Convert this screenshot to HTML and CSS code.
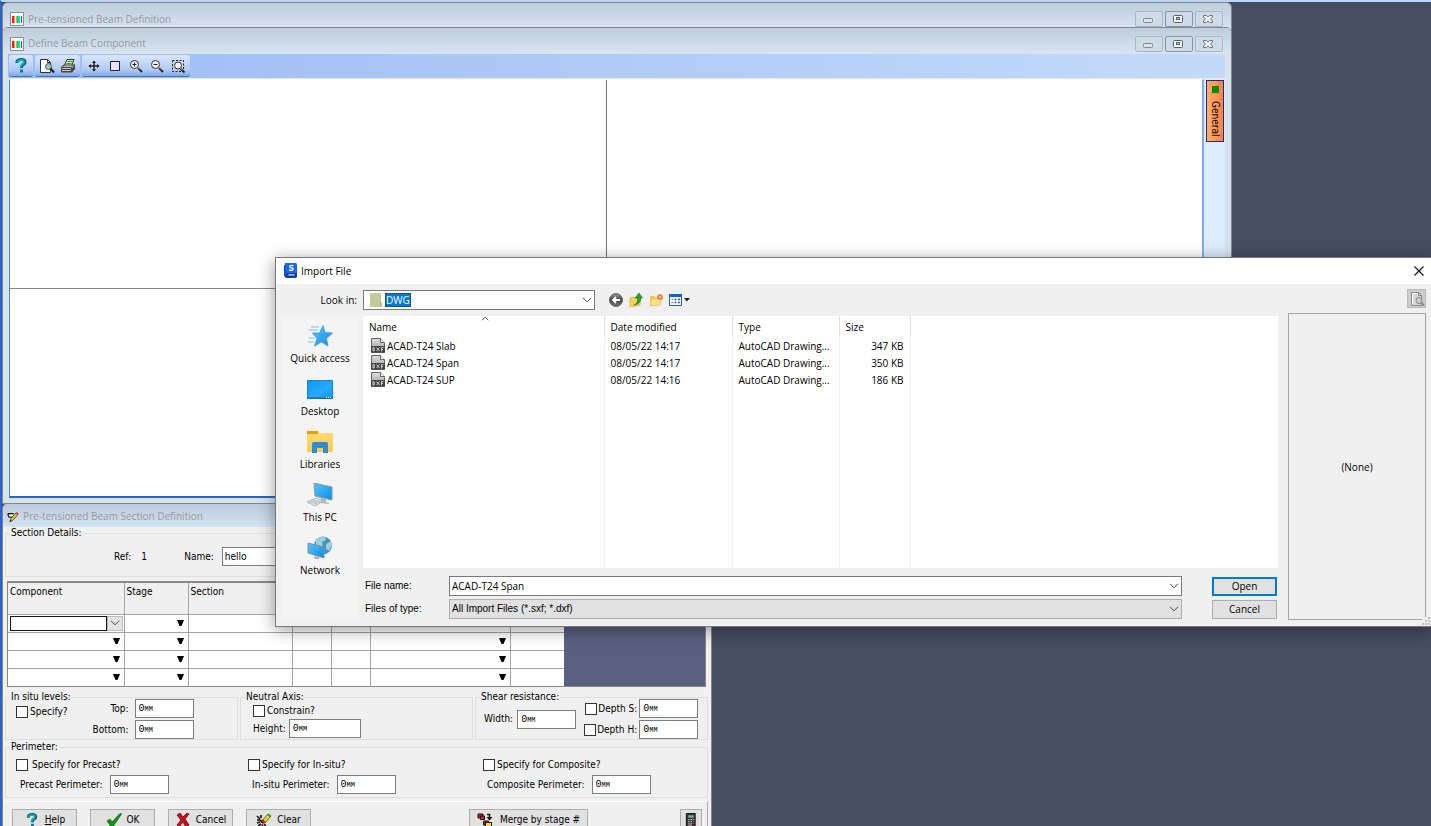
FILE: index.html
```html
<!DOCTYPE html>
<html lang="en">
<head>
<meta charset="utf-8">
<title>Pre-tensioned Beam Definition</title>
<link rel="stylesheet" href="styles.css">
</head>
<body>
<svg class="defs" aria-hidden="true">
  <defs>
    <linearGradient id="blue" x1="0" y1="0" x2="1" y2="1"><stop offset="0" stop-color="#5cc4fb"/><stop offset="1" stop-color="#0b8be6"/></linearGradient>
    <linearGradient id="screen" x1="0" y1="0" x2="1" y2="1"><stop offset="0" stop-color="#0a9bf5"/><stop offset=".6" stop-color="#2aa9ff"/><stop offset="1" stop-color="#0a93f0"/></linearGradient>
    <linearGradient id="folder" x1="0" y1="0" x2="0" y2="1"><stop offset="0" stop-color="#ffdc77"/><stop offset="1" stop-color="#fbcb50"/></linearGradient>
    <linearGradient id="ball" x1="0" y1="0" x2="0" y2="1"><stop offset="0" stop-color="#999"/><stop offset=".5" stop-color="#444"/><stop offset="1" stop-color="#777"/></linearGradient>
    <linearGradient id="page" x1="0" y1="0" x2="0" y2="1"><stop offset="0" stop-color="#ddd"/><stop offset="1" stop-color="#999"/></linearGradient>
    <symbol id="i-app" viewBox="0 0 14 14"><path fill="#fff" stroke="#8d8d95" d="M.5.5h13v13H.5z"/><path fill="#e22" d="M2 4h2v7H2z"/><path fill="#f90" d="M4 4h1v7H4z"/><path fill="#a9c52a" d="M6 4h1v7H6z"/><path fill="#20b98a" d="M7 4h1v7H7z"/><path fill="#0dd" d="M8 4h2v7H8z"/><path fill="#25d" d="M11 4h1v7h-1z"/></symbol>
    <symbol id="i-min" viewBox="0 0 28 16"><rect x="8.500" y="7.500" width="9" height="4" rx="1" fill="#e4e4e4" stroke="#7f8790"/></symbol>
    <symbol id="i-max" viewBox="0 0 28 16"><rect x="8.500" y="4.500" width="9" height="7" rx="1" fill="#f4f4f4" stroke="#596270"/><rect x="11.500" y="6.500" width="3" height="2" fill="#ccc" stroke="#596270"/></symbol>
    <symbol id="i-x" viewBox="0 0 28 16"><path d="M8.500 4.500h3l1.500 1.500 1.500-1.500h3v1.500L15.500 8l2 2v1.500h-3L13 10l-1.500 1.500h-3V10l2-2-2-2z" fill="#eee" stroke="#6c7480"/></symbol>
    <symbol id="i-help" viewBox="0 0 12 15"><path d="M2 5V3.500Q3 1.500 6 1.500q4 0 4 2.500 0 2-2.500 3Q6.500 8 6.500 10" fill="none" stroke="#075a75" stroke-width="3"/><path d="M2 4.500Q3 2 6 2q3 0 3 2 0 1.500-2 2.500-1.500 1-1.500 3" fill="none" stroke="#12abb5" stroke-width="2"/><path d="M5 11.500h3v3H5z" fill="#087a91"/></symbol>
    <symbol id="i-preview" viewBox="0 0 16 16"><path d="M1.500 1.500h7l3 3v10h-10z" fill="#fff" stroke="#333"/><path d="M8.500 1.500v3h3" fill="none" stroke="#333"/><circle cx="9.500" cy="8.500" r="3" fill="#9dc5c8" stroke="#555"/><path d="m11.500 10.500 3.500 4" stroke="#222" stroke-width="2"/></symbol>
    <symbol id="i-print" viewBox="0 0 16 16"><path d="m4.500 7 2.500-5.500h7L12 7" fill="#c9ecb8" stroke="#333"/><path d="M7.500 3.500h5M6.500 5.500h5" stroke="#2b9a35"/><path d="m1 9 3-2.500h11V11l-3 3.500H1z" fill="#444"/><path d="m2.500 9 2-1.500h9L12 9z" fill="#bbb"/><path d="M2 10.500h9M2 12.500h9" stroke="#c8c8c8"/><path d="m12 10 2-2" stroke="#999"/></symbol>
    <symbol id="i-move" viewBox="0 0 14 14"><path d="M7 2v10M2 7h10" stroke="#222" stroke-width="1.400"/><path d="m7 1.500 2 2.500H5zM7 12.500 9 10H5zM1.500 7 4 5v4zM12.500 7 10 5v4z" fill="#222"/></symbol>
    <symbol id="i-rect" viewBox="0 0 14 14"><path d="M2.500 2.500h9v9h-9z" fill="#e8e4fb" stroke="#222"/></symbol>
    <symbol id="i-zin" viewBox="0 0 14 14"><circle cx="5.500" cy="5.500" r="4" fill="#f4f1fb" stroke="#333"/><path d="M3.500 5.500h4M5.500 3.500v4" stroke="#222"/><path d="m9 9 4 4" stroke="#222" stroke-width="2"/><path d="m9 8.500 2 2" stroke="#d7c23a"/></symbol>
    <symbol id="i-zout" viewBox="0 0 14 14"><circle cx="5.500" cy="5.500" r="4" fill="#f4f1fb" stroke="#333"/><path d="M3.500 5.500h4" stroke="#222"/><path d="m9 9 4 4" stroke="#222" stroke-width="2"/><path d="m9 8.500 2 2" stroke="#d7c23a"/></symbol>
    <symbol id="i-zwin" viewBox="0 0 14 14"><path d="M1.500 1.500h11v11h-11z" fill="none" stroke="#222" stroke-dasharray="2 1.500"/><circle cx="7" cy="6.500" r="3.500" fill="#f4f1fb" stroke="#333"/><path d="m9.500 9.500 4 4" stroke="#222" stroke-width="2"/><path d="m9.500 9 2 2" stroke="#d7c23a"/></symbol>
    <symbol id="i-pen" viewBox="0 0 12 12"><path d="M.8 2.800h6M.8 3l1.500 3h3" fill="none" stroke="#111" stroke-width="1.600"/><path d="M1.500 3.500h5L5 5.500H2.500z" fill="#fff"/><path d="m3 10.500 1-3L9 2l2 1.500-5.500 6z" fill="#f0cf19" stroke="#333" stroke-width=".8"/><path d="m8.500 2.500 1.500-1.500 1.500 1.500L10.500 4z" fill="#c33"/><path d="m2.500 11 .8-2 1.400 1z" fill="#111"/></symbol>
    <symbol id="i-dxf" viewBox="0 0 14 15"><path d="M.5.500h9l4 4v10H.5z" fill="url(#page)" stroke="#666"/><path d="M9.500.5v4h4" fill="#fff" stroke="#666"/><path d="M0 8h14v6.500H0z" fill="#444"/><path d="M2 9.500v3.500h1q1-1.700 0-3.500zM5.500 9.500l3 3.500M8.500 9.500l-3 3.500M10.500 13.500v-4h2M10.500 11.500H12" stroke="#eee" fill="none" stroke-width=".8"/></symbol>
    <symbol id="i-chev" viewBox="0 0 10 6"><path d="m1 .8 4 4 4-4" fill="none" stroke="#444"/></symbol>
    <symbol id="i-tri" viewBox="0 0 7 6"><path d="M0 0h7L4.500 6h-2z" fill="#000"/></symbol>
  </defs>
</svg>

<main class="desktop">
  <section class="window definition">
    <header class="titlebar">
      <svg class="app-icon"><use href="#i-app"/></svg><h1>Pre-tensioned Beam Definition</h1>
      <div class="controls"><button aria-label="Minimise"><svg><use href="#i-min"/></svg></button><button class="max" aria-label="Maximise"><svg><use href="#i-max"/></svg></button><button aria-label="Close"><svg><use href="#i-x"/></svg></button></div>
    </header>
  </section>

  <section class="window component">
    <header class="titlebar">
      <svg class="app-icon"><use href="#i-app"/></svg><h2>Define Beam Component</h2>
      <div class="controls"><button aria-label="Minimise"><svg><use href="#i-min"/></svg></button><button class="max" aria-label="Maximise"><svg><use href="#i-max"/></svg></button><button aria-label="Close"><svg><use href="#i-x"/></svg></button></div>
    </header>
    <div class="component-body">
      <nav class="toolbar">
        <div class="tools"><button aria-label="Help"><svg class="help-icon"><use href="#i-help"/></svg></button></div>
        <div class="tools"><button aria-label="Print preview"><svg><use href="#i-preview"/></svg></button><button aria-label="Print"><svg><use href="#i-print"/></svg></button></div>
        <div class="tools"><button aria-label="Pan"><svg class="small"><use href="#i-move"/></svg></button><button aria-label="Zoom extents"><svg class="small"><use href="#i-rect"/></svg></button><button aria-label="Zoom in"><svg class="small"><use href="#i-zin"/></svg></button><button aria-label="Zoom out"><svg class="small"><use href="#i-zout"/></svg></button><button aria-label="Zoom window"><svg class="small"><use href="#i-zwin"/></svg></button></div>
      </nav>
      <div class="workspace">
        <div class="canvas"></div>
        <aside class="side"><button class="tab"><span class="dot"></span><span class="tab-text">General</span></button></aside>
      </div>
    </div>
  </section>

  <section class="window section-win">
    <header class="titlebar"><svg class="pen"><use href="#i-pen"/></svg><h2>Pre-tensioned Beam Section Definition</h2></header>
    <form class="section-body">
      <fieldset class="details">
        <legend>Section Details:</legend>
        <div class="details-row"><span>Ref:</span><span class="ref">1</span><label for="name">Name:</label><input id="name" type="text" value="hello"></div>
      </fieldset>

      <div class="table-box">
        <table class="components">
          <colgroup><col class="c1"><col class="c2"><col class="c3"><col class="c4"><col class="c4"><col class="c5"><col class="c6"></colgroup>
          <thead><tr><th>Component</th><th>Stage</th><th>Section</th><th></th><th></th><th></th><th></th></tr></thead>
          <tbody>
            <tr><td class="edit"><div class="combo"><input type="text" aria-label="Component"><button type="button" aria-label="Choose component"><svg><use href="#i-chev"/></svg></button></div></td><td><svg class="tri"><use href="#i-tri"/></svg></td><td></td><td></td><td></td><td><svg class="tri"><use href="#i-tri"/></svg></td><td></td></tr>
            <tr><td><svg class="tri"><use href="#i-tri"/></svg></td><td><svg class="tri"><use href="#i-tri"/></svg></td><td></td><td></td><td></td><td><svg class="tri"><use href="#i-tri"/></svg></td><td></td></tr>
            <tr><td><svg class="tri"><use href="#i-tri"/></svg></td><td><svg class="tri"><use href="#i-tri"/></svg></td><td></td><td></td><td></td><td><svg class="tri"><use href="#i-tri"/></svg></td><td></td></tr>
            <tr><td><svg class="tri"><use href="#i-tri"/></svg></td><td><svg class="tri"><use href="#i-tri"/></svg></td><td></td><td></td><td></td><td><svg class="tri"><use href="#i-tri"/></svg></td><td></td></tr>
          </tbody>
        </table>
      </div>

      <div class="groups">
        <fieldset>
          <legend>In situ levels:</legend>
          <div class="levels">
            <label class="check"><input type="checkbox">Specify?</label>
            <div class="pairs"><label for="top">Top:</label><input class="unit" id="top" type="text" value="0mm"><label for="bottom">Bottom:</label><input class="unit" id="bottom" type="text" value="0mm"></div>
          </div>
        </fieldset>
        <fieldset>
          <legend>Neutral Axis:</legend>
          <div class="axis">
            <label class="check"><input type="checkbox">Constrain?</label>
            <div class="field"><label for="height">Height:</label><input class="unit wide" id="height" type="text" value="0mm"></div>
          </div>
        </fieldset>
        <fieldset>
          <legend>Shear resistance:</legend>
          <div class="shear">
            <div class="field"><label for="width">Width:</label><input class="unit" id="width" type="text" value="0mm"></div>
            <div class="pairs"><label class="check"><input type="checkbox">Depth S:</label><input class="unit" type="text" value="0mm" aria-label="Depth S"><label class="check"><input type="checkbox">Depth H:</label><input class="unit" type="text" value="0mm" aria-label="Depth H"></div>
          </div>
        </fieldset>
      </div>

      <fieldset class="perimeter">
        <legend>Perimeter:</legend>
        <div class="perimeter-grid">
          <div><label class="check precast"><input type="checkbox">Specify for Precast?</label><div class="field"><label for="pp">Precast Perimeter:</label><input class="unit" id="pp" type="text" value="0mm"></div></div>
          <div><label class="check"><input type="checkbox">Specify for In-situ?</label><div class="field"><label for="ip">In-situ Perimeter:</label><input class="unit" id="ip" type="text" value="0mm"></div></div>
          <div><label class="check"><input type="checkbox">Specify for Composite?</label><div class="field"><label for="cp">Composite Perimeter:</label><input class="unit" id="cp" type="text" value="0mm"></div></div>
        </div>
      </fieldset>

      <footer class="actions">
        <button type="button"><svg class="help-icon"><use href="#i-help"/></svg><span><u>H</u>elp</span></button>
        <button type="button"><svg viewBox="0 0 16 14"><path d="m1 8 3-2 2 3 8-8.500 1.500.5-8.500 12.500H5z" fill="#0a9a12" stroke="#066b0b" stroke-width=".8"/></svg>OK</button>
        <button type="button"><svg viewBox="0 0 14 14"><path d="m1 2 3-2 3 4 4-4 2 1-4 5 4 6-3 2-3-5-4 5-2-2 4-5z" fill="#c41420" stroke="#700" stroke-width=".8"/></svg>Cancel</button>
        <button type="button"><svg viewBox="0 0 16 14"><path d="m6 8 6-7 3 2-6 7z" fill="#f4dc24" stroke="#333" stroke-width=".8"/><path d="m11 2 1.500-1.500 3 2L14 4.500z" fill="#3a3"/><path d="m4 9 2.500-3L9.500 8.500 7.500 11z" fill="#d22"/><path d="m1 3 3 3M1 7h3M5 2v3M1 10l3-1M2 13l3-2M7 13.500l-1-2M10 13l-2-2M4 7l3 3" stroke="#111" stroke-width="1.600"/></svg>Clear</button>
        <button type="button" class="merge"><svg viewBox="0 0 16 14"><path d="M1 1h5v4H1z" fill="#d22" stroke="#111"/><path d="M3.500 3h4v3.500h-4z" fill="#d22" stroke="#111"/><path d="M10 1.500h2.500v4" fill="none" stroke="#111" stroke-width="1.500"/><path d="M9.500 4h6l-3 3.500z" fill="#111"/><path d="M6.500 8h5v4h-5z" fill="#d22" stroke="#111"/><path d="M8.500 9.500h6v4h-6z" fill="#fd2" stroke="#111"/></svg>Merge by stage #</button>
        <button type="button" class="calc" aria-label="Calculator"><svg viewBox="0 0 12 15"><path d="M1 .5h9.500v14H1z" fill="#333" stroke="#111"/><path d="M3 2.500h6v2.500H3z" fill="#7ab5ad"/><path d="M3 7h1.500M5.500 7H7M8 7h1.500M3 9h1.500M5.500 9H7M3 11h1.500M5.500 11H7M3 13h4" stroke="#ddd"/><path d="M8 9h1.500M8 11h1.500" stroke="#e44"/></svg></button>
      </footer>
    </form>
  </section>

  <section class="dialog" role="dialog" aria-label="Import File">
    <header class="dialog-title">
      <svg viewBox="0 0 14 15"><path d="M1 0h11l1 1v12l-1 1H1z" fill="#1768ee"/><path d="M1 1 0 3v10l2 2h10l1-1H2z" fill="#0c48b9"/><path d="M2 10h11v4H2z" fill="#123f9d"/><path d="M4.500 11.800h6" stroke="#b5cdf8" stroke-width="1.500"/><path d="M9.500 3Q8 2 6.500 2.600q-1.500 1.200 0 2l2 .4q1.500 1-.2 2.200-1.800.5-3.300-.4" fill="none" stroke="#fff" stroke-width="1.300"/></svg>
      <h2>Import File</h2>
      <button aria-label="Close"><svg viewBox="0 0 10 10"><path d="m.5.5 9 9M9.500.5l-9 9" stroke="#111" stroke-width="1.100"/></svg></button>
    </header>
    <form class="dialog-body">
      <div class="browser">
        <div class="look-row">
          <label for="look">Look in:</label>
          <div class="look-combo" id="look" tabindex="0" role="combobox" aria-expanded="false" aria-controls="files"><svg class="folder" viewBox="0 0 12 14"><path d="M0 0h11v9l1 1v4H0z" fill="#b9c28c"/><path d="M0 0h10v14H0z" fill="#c3cb98"/></svg><span>DWG</span><svg class="chev"><use href="#i-chev"/></svg></div>
          <div class="nav-icons">
            <button type="button" aria-label="Back"><svg viewBox="0 0 14 14"><circle cx="7" cy="7" r="6.500" fill="url(#ball)" stroke="#666"/><path d="M11 7H4M7 4 4 7l3 3" fill="none" stroke="#fff" stroke-width="1.800"/></svg></button>
            <button type="button" aria-label="Up one level"><svg viewBox="0 0 14 14"><path d="m1 5 4-1 1 1 6-1-1 8-10 2z" fill="#f6d35b" stroke="#d7a92e" stroke-width=".7"/><path d="M5 12q4-1 3.500-7H6l4-5 3.500 5h-2Q12 11 5 12z" fill="#25a32c" stroke="#12761b" stroke-width=".6"/></svg></button>
            <button type="button" aria-label="New folder"><svg viewBox="0 0 14 14"><path d="M1 3h4l1 1h5v8l-10 1z" fill="#f2c950"/><path d="m1 13 2-7 10-1-2 7z" fill="#ffe28a" stroke="#e3b647" stroke-width=".6"/><circle cx="11" cy="4" r="2.700" fill="#f0642d"/><path d="M11 2.500v3M9.500 4h3" stroke="#ffd9b0"/></svg></button>
            <button type="button" class="views" aria-label="Views"><svg viewBox="0 0 21 14"><path d="M.5 1.500h12v11H.5z" fill="#fff" stroke="#1762b8"/><path d="M0 1h13v3H0z" fill="#1762c8"/><path d="M2.500 6.500h2M2.500 9.500h2" stroke="#6aa" stroke-width="1.500"/><path d="M5.500 6.500h2M9 9.500h2" stroke="#26b" stroke-width="1.500"/><path d="M9 6.500h2M5.500 9.500h2" stroke="#744" stroke-width="1.500"/><path d="M15 5h6l-3 3.500z" fill="#222"/></svg></button>
          </div>
        </div>
        <nav class="places">
          <button type="button"><svg viewBox="0 0 28 24"><path d="M5 3h8M3 6h9M3 14h6M2 18h6" stroke="#7cc0ea"/><path d="m17 1.500 2 7 7.500.5-6 5.500 1.500 7.500-6.500-4-7 4 2.500-7.500L6.500 9h7z" fill="url(#blue)" stroke="#3999d5" stroke-width=".8"/></svg>Quick access</button>
          <button type="button"><svg viewBox="0 0 28 24"><path d="M1.500 3.500h25v18h-25z" fill="url(#screen)" stroke="#1684cf"/><path d="M1 21h26" stroke="#0b5d9b"/><path d="M20 20.500h6" stroke="#fff" stroke-dasharray="1 1"/></svg>Desktop</button>
          <button type="button"><svg viewBox="0 0 28 24"><path d="M1 1h11l1.500 2H27v19H1z" fill="url(#folder)"/><path d="M1 1h11v3H1z" fill="#e2a00c"/><path d="M6 23v-9q0-2 2-2h12q2 0 2 2v9h-5v-5h-6v5z" fill="#338bd2"/></svg>Libraries</button>
          <button type="button"><svg viewBox="0 0 28 24"><path d="m8 0 18 4v13L9 13z" fill="url(#blue)" stroke="#8998a4"/><path d="m15 15 5 1v3l3 1v1l-8-1z" fill="#adb7bd"/><path d="m1 19 9-4 8 3-9 5z" fill="#e2e6e8" stroke="#9ea8ad" stroke-width=".8"/><path d="m3 19 9 2M5 18l9 2M7 17l9 2" stroke="#a9b1b5" stroke-width=".7"/></svg>This PC</button>
          <button type="button"><svg viewBox="0 0 28 24"><circle cx="17" cy="9.500" r="9" fill="#4593bb"/><path d="M10 4q4-4 9-3l1 3-4 2 1 4-4 2-3-3zM20 8l5-3 1 4-3 6-3-2z" fill="#9bd0de"/><path d="m2 7 16 4v11L2 17z" fill="url(#blue)" stroke="#7d929f"/><path d="m9 20 4 1v2H8z" fill="#aab4b9"/></svg>Network</button>
        </nav>
        <div class="files" id="files">
          <table>
            <colgroup><col class="f-name"><col class="f-date"><col class="f-type"><col class="f-size"><col></colgroup>
            <thead><tr><th class="sorted">Name<svg class="sort"><use href="#i-chev"/></svg></th><th>Date modified</th><th>Type</th><th>Size</th><th></th></tr></thead>
            <tbody>
              <tr><td><span class="file"><svg><use href="#i-dxf"/></svg>ACAD-T24 Slab</span></td><td>08/05/22 14:17</td><td>AutoCAD Drawing...</td><td class="num">347 KB</td><td></td></tr>
              <tr><td><span class="file"><svg><use href="#i-dxf"/></svg>ACAD-T24 Span</span></td><td>08/05/22 14:17</td><td>AutoCAD Drawing...</td><td class="num">350 KB</td><td></td></tr>
              <tr><td><span class="file"><svg><use href="#i-dxf"/></svg>ACAD-T24 SUP</span></td><td>08/05/22 14:16</td><td>AutoCAD Drawing...</td><td class="num">186 KB</td><td></td></tr>
              <tr class="rest"><td></td><td></td><td></td><td></td><td></td></tr>
            </tbody>
          </table>
        </div>
        <div class="choose">
          <label for="fname">File name:</label>
          <div class="file-combo"><input id="fname" type="text" value="ACAD-T24 Span"><svg><use href="#i-chev"/></svg></div>
          <button type="button" class="push primary">Open</button>
          <label for="ftype">Files of type:</label>
          <div class="file-combo grey"><select id="ftype"><option>All Import Files (*.sxf; *.dxf)</option></select><svg><use href="#i-chev"/></svg></div>
          <button type="button" class="push">Cancel</button>
        </div>
      </div>
      <div class="preview-col">
        <button type="button" class="preview-btn" aria-label="Preview"><svg viewBox="0 0 16 16"><path d="M2.500 1.500h7l3 3v10h-10z" fill="#d8d8d8" stroke="#888"/><path d="M3.500 13V2.500H9" fill="none" stroke="#fff"/><path d="M9.500 1.500v3h3" fill="none" stroke="#888"/><circle cx="10" cy="9.500" r="3" fill="#ccc" stroke="#888"/><path d="m12 11.500 3 3" stroke="#888" stroke-width="2"/></svg></button>
        <div class="preview">(None)</div>
        <svg class="grip" viewBox="0 0 8 8"><path d="M6 0h2v2H6zM3 3h2v2H3zM6 3h2v2H6zM0 6h2v2H0zM3 6h2v2H3zM6 6h2v2H6z" fill="#bfbfbf"/></svg>
      </div>
    </form>
  </section>
</main>
</body>
</html>
```
FILE: styles.css
```css
* { box-sizing: border-box; }
body { margin: 0; font: 10px/14px "DejaVu Sans Condensed", "DejaVu Sans", sans-serif; color: #000; }
button, input, select { font: inherit; color: inherit; margin: 0; padding: 0; border-radius: 0; }
button { display: flex; align-items: center; justify-content: center; border: 0; background: none; }
h1, h2 { margin: 0; font: inherit; }
svg { display: block; flex: none; }
.defs { position: absolute; width: 0; height: 0; }

.desktop { position: relative; height: 100vh; overflow: hidden; background: #464d60; border-top: 2px solid #b9d5f5; border-left: 2px solid #2b62c4; }

/* MDI windows */
.window { position: absolute; display: flex; flex-direction: column; border: 1px solid #858585; border-radius: 6px 6px 0 0; background: #d6e3ef; overflow: hidden; }
.definition { top: 0; left: 0; right: 199px; height: 60px; }
.component { top: 25px; left: 0; right: 199px; height: 477px; }
.section-win { top: 501px; left: 0; width: 710px; background: #f0f0f0; }
.titlebar { display: flex; align-items: center; gap: 4px; height: 27px; padding: 5px 8px 0 7px; flex: none; background: linear-gradient(#becddb, #d8e4f0); color: #9499a0; font: 10px/15px "Open Sans", sans-serif; }
.component .titlebar { height: 26px; }
.app-icon { width: 14px; height: 14px; }
.controls { display: flex; gap: 2px; margin-left: auto; }
.controls button { width: 28px; height: 16px; border: 1px solid #a9b8c8; border-radius: 2px; background: #cedbe7; }
.controls .max { border-color: #8595ad; }
.controls svg { width: 28px; height: 16px; }

.component-body { flex: 1; display: flex; flex-direction: column; margin: 0 6px 5px 5px; background: #deeafe; min-height: 0; }
.toolbar { display: flex; gap: 2px; height: 24px; flex: none; padding: 1px; background: linear-gradient(90deg, #9ebcf5, #c3daf9); }
.tools { display: flex; align-items: center; gap: 5px; height: 22px; padding: 0 4px; border-radius: 3px; border-bottom: 1px solid #4470ae; background: linear-gradient(#dbe8fc, #b0caf5 70%, #83a9e5); }
.tools svg { width: 16px; height: 16px; }
.tools .small { width: 16px; height: 14px; }
.tools .help-icon { height: 15px; }
.workspace { flex: 1; display: flex; min-height: 0; }
.canvas { flex: 1; margin: 1px 0 0 1px; border: 1px solid #4681cd; border-bottom: 2px solid #2867bd; border-right: 2px solid #83aae6; border-top-color: #fff; background: linear-gradient(#777, #777) 50% 0 / 1px 100% no-repeat, linear-gradient(#888, #888) 0 50% / 100% 1px no-repeat, #fff; }
.side { width: 21px; padding-top: 2px; }
.tab { flex-direction: column; gap: 8px; width: 18px; height: 62px; margin-left: 2px; border: 1px solid #24248a; background: linear-gradient(90deg, #ffb068, #fb8247); }
.dot { width: 7px; height: 7px; background: #0a8500; }
.tab-text { writing-mode: vertical-rl; line-height: 12px; }

/* Section definition */
.section-win .titlebar { height: 23px; padding: 2px 4px 0; background: linear-gradient(#bccbd9, #d3e3f3); }
.pen { width: 12px; height: 12px; }
.section-body { padding: 0 3px 0 2px; }
fieldset { min-width: 0; margin: 0; padding: 0; border: 1px solid #dedede; }
legend { margin-left: 4px; padding: 0 1px; line-height: 12px; }
input[type="text"] { height: 19px; padding: 0 2px; border: 1px solid #7d7d7d; background: #fff; outline: 0; }
.section-body .unit { width: 59px; padding: 0 3px; font: 10px "Liberation Mono", monospace; font-variant: small-caps; }
.section-body .wide { width: 72px; }
.check { display: flex; align-items: center; gap: 2px; white-space: nowrap; }
.check input { appearance: none; width: 12px; height: 12px; border: 1px solid #333; background: #fff; }
.details { height: 50px; }
.details-row { display: flex; align-items: center; margin: 8px 0 0 108px; }
.ref { width: 43px; margin-left: 10px; }
.details-row input { margin-left: 8px; width: 120px; }

.table-box { margin: 4px 2px 0; border: 1px solid #888; border-top-width: 2px; background: #596080; }
.components { border-collapse: collapse; table-layout: fixed; width: 556px; background: #fff; }
.components th, .components td { padding: 0; border-right: 1px solid #a5a5a5; border-bottom: 1px solid #a5a5a5; }
.components tr > :last-child { border-right: 0; }
.components tr:last-child td { border-bottom: 0; }
.components th { height: 31px; padding: 2px 2px 0; background: #f0f0f0; text-align: left; vertical-align: top; font-weight: 400; }
.components td { height: 18px; }
.c1 { width: 116px; } .c2 { width: 64px; } .c3 { width: 104px; } .c4 { width: 39px; } .c5 { width: 140px; } .c6 { width: 54px; }
.tri { width: 7px; height: 6px; margin: 0 4px 0 auto; }
.combo { display: flex; height: 15px; margin: 0 1px 0 2px; }
.combo input[type="text"] { flex: 1; min-width: 0; height: 15px; border-color: #111; }
.combo button { width: 16px; background: #e3e3e3; border: 1px solid #bbb; }
.combo svg { width: 10px; height: 6px; }

.groups { display: grid; grid-template-columns: 1fr 1fr 1fr; gap: 2px; margin-top: 4px; }
.groups fieldset { height: 49px; }
.levels, .shear { display: flex; }
.levels { padding-left: 10px; margin-top: -4px; }
.levels .check, .axis .check { height: 16px; }
.levels > .check { margin-top: 5px; }
.pairs { display: grid; grid-template-columns: auto auto; column-gap: 6px; row-gap: 2px; align-items: center; justify-items: end; margin-left: 25px; }
.field { display: flex; align-items: center; gap: 4px; }
.axis { padding-left: 12px; }
.axis .field { gap: 3px; }
.shear { align-items: center; margin-top: -4px; padding-left: 8px; }
.shear .pairs { margin-left: 8px; column-gap: 2px; }
.shear .check { gap: 1px; }
.perimeter { margin-top: 1px; height: 57px; }
.perimeter-grid { display: grid; grid-template-columns: 230px 233px 1fr; gap: 2px; padding-left: 10px; }
.perimeter .check { margin-top: 5px; }
.perimeter .precast { gap: 4px; }
.perimeter .field { margin: 3px 0 0 4px; gap: 7px; }
.actions { display: flex; gap: 13px; margin-top: 3px; padding: 7px 5px 0 7px; border-top: 1px solid #fff; border-right: 1px solid #aaa; }
.actions button { gap: 5px; width: 65px; height: 21px; border: 1px solid #adadad; background: #e1e1e1; white-space: nowrap; }
.actions svg { width: 16px; height: 14px; }
.actions .merge { width: 119px; margin-left: 145px; gap: 7px; }
.actions .calc { width: 22px; margin-left: auto; }

/* File dialog */
.dialog { position: absolute; top: 255px; left: 273px; right: 0; border: 1px solid #777; border-right: 0; background: #f0f0f0; box-shadow: 0 3px 16px rgba(0, 0, 0, .4); font: 10px/14px "Open Sans", sans-serif; }
.dialog-title { display: flex; align-items: center; gap: 3px; height: 26px; padding: 0 7px 1px 8px; background: #fff; }
.dialog-title svg { width: 14px; height: 15px; }
.dialog-title button { margin-left: auto; }
.dialog-title button svg { width: 10px; height: 10px; }
.dialog-body { display: flex; gap: 10px; padding: 5px 5px 6px; }
.browser { flex: 1; min-width: 0; display: grid; grid-template-columns: 78px 1fr; column-gap: 4px; grid-template-rows: 20px auto auto; padding-top: 1px; }
.look-row { grid-column: 1 / 3; display: flex; align-items: center; }
.look-row label { width: 76px; text-align: right; }
.look-combo { display: flex; align-items: center; width: 232px; height: 20px; margin-left: 6px; padding: 0 2px 0 6px; border: 1px solid #7a7a7a; background: #fff; }
.look-combo span { margin-left: 3px; padding: 0 1px; background: #0078d7; color: #fff; outline: 1px dotted #333; outline-offset: -1px; }
.folder { width: 12px; height: 14px; }
.chev { width: 10px; height: 6px; margin-left: auto; }
.nav-icons { display: flex; gap: 6px; margin-left: 14px; }
.nav-icons svg { width: 14px; height: 14px; }
.nav-icons .views svg { width: 21px; }
.places { grid-row: 2 / 4; display: flex; flex-direction: column; gap: 13px; margin-top: 6px; padding-top: 8px; background: #f4f4f4; }
.places button { flex-direction: column; gap: 3px; height: 40px; white-space: nowrap; }
.places svg { width: 28px; height: 24px; }
.files { height: 252px; margin-top: 6px; background: #fff; }
.files table { width: 100%; height: 100%; table-layout: fixed; border-collapse: collapse; }
.files th, .files td { height: 17px; padding: 0 6px; border-right: 1px solid #edf4fb; text-align: left; font-weight: 400; white-space: nowrap; }
.files th { height: 21px; border-right-color: #e0e0e0; }
.files tr > :last-child { border-right: 0; }
.files .num { text-align: right; }
.f-name { width: 241px; } .f-date { width: 128px; } .f-type { width: 107px; } .f-size { width: 71px; }
.sorted { position: relative; }
.sort { position: absolute; top: 0; left: 118px; width: 8px; height: 5px; transform: rotate(180deg); }
.file { display: flex; align-items: center; gap: 2px; padding-left: 2px; }
.file svg { width: 14px; height: 15px; }
.files .rest td { height: auto; }
.choose { display: grid; grid-template-columns: 78px 1fr 65px; column-gap: 0; row-gap: 3px; align-items: center; margin-top: 8px; padding: 0 1px 1px 2px; }
.choose label, .choose select { font-family: "Liberation Sans", sans-serif; }
.choose label { width: 84px; }
.file-combo { position: relative; margin: 0 30px 0 6px; }
.file-combo input[type="text"], .file-combo select { display: block; width: 100%; height: 20px; padding: 0 2px; border: 1px solid #7a7a7a; appearance: none; background: #fff; }
.file-combo.grey select { border-color: #adadad; background: #e1e1e1; }
.file-combo svg { position: absolute; right: 3px; top: 7px; width: 10px; height: 6px; }
.push { width: 65px; height: 19px; border: 1px solid #adadad; background: #e1e1e1; }
.push.primary { border: 2px solid #0078d7; }
.preview-col { position: relative; display: flex; flex-direction: column; width: 138px; }
.preview-btn { align-self: flex-end; width: 19px; height: 19px; border: 1px solid #bbb; background: #ccc; }
.preview-btn svg { width: 16px; height: 16px; }
.preview { flex: 1; display: flex; align-items: center; justify-content: center; margin-top: 5px; border: 1px solid #a5a5a5; }
.grip { position: absolute; right: -4px; bottom: -5px; width: 8px; height: 8px; background: #f0f0f0; }
```
